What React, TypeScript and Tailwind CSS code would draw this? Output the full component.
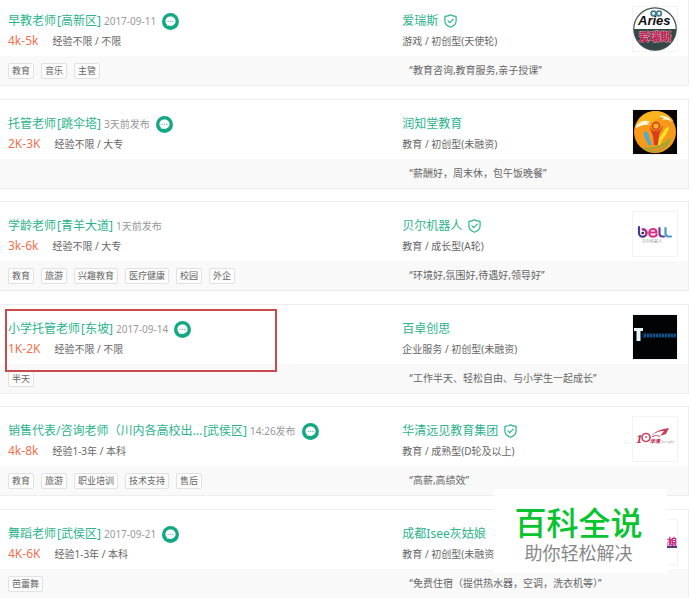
import type { ReactNode } from "react";

type Job = {
  title: string;
  area: string;
  time: string;
  chat?: boolean;
  salary: string;
  need: string;
  tags: string[];
  company: string;
  verified?: boolean;
  industry: string;
  slogan: string;
  logo: ReactNode;
  marked?: boolean;
};

function ChatIcon() {
  return (
    <svg viewBox="0 0 17 17" className="size-[17px]" aria-hidden="true">
      <circle cx="8.5" cy="8.5" r="8.5" fill="#14a783" />
      <path
        d="M8.5 3.600C5.600 3.600 3.400 5.600 3.400 8.300c0 1.500.7 2.700 1.800 3.600v1.200l1.400-.5c.6.2 1.200.3 1.900.3 2.900 0 5.100-2 5.100-4.600S11.400 3.600 8.500 3.600Z"
        fill="#fff"
      />
      <g fill="#5fc3aa">
        <circle cx="6.200" cy="8.400" r=".7" />
        <circle cx="8.500" cy="8.400" r=".7" />
        <circle cx="10.800" cy="8.400" r=".7" />
      </g>
    </svg>
  );
}

function ShieldIcon() {
  return (
    <svg
      viewBox="0 0 13 14"
      className="h-[14px] w-[13px]"
      fill="none"
      stroke="#2bb38c"
      strokeWidth="1.2"
      strokeLinejoin="round"
      strokeLinecap="round"
      aria-hidden="true"
    >
      <path d="M6.500.8C5 2 3 2.300.9 2.300V7c0 3.200 2.400 5.100 5.600 6.200C9.700 12.100 12.100 10.200 12.100 7V2.300C10 2.300 8 2 6.500.8Z" />
      <path d="m4 6.900 1.900 1.800 3.300-3.500" />
    </svg>
  );
}

function AriesLogo() {
  return (
    <svg viewBox="0 0 44 44" className="size-11" role="img" aria-label="Aries">
      <circle cx="22" cy="22" r="21.200" fill="#fff" stroke="#4a5656" strokeWidth="1.200" />
      <path d="M.8 22h42.400a21.200 21.200 0 0 1-42.400 0Z" fill="#36474a" />
      <g fill="none" stroke="#477b91" strokeWidth="1.800">
        <circle cx="20.500" cy="6.500" r="2.300" />
        <circle cx="26" cy="6.500" r="2.300" />
      </g>
      <text x="5" y="18" fontSize="13" fontWeight="900" fontStyle="italic" fontFamily="Liberation Sans, sans-serif" fill="#111">
        Aries
      </text>
      <text x="5.500" y="34" fontSize="11" fontWeight="900" fontFamily="Noto Sans CJK SC, sans-serif" fill="#c4215b" stroke="#eed" strokeWidth=".5" paintOrder="stroke">
        爱瑞斯
      </text>
    </svg>
  );
}

function SunLogo() {
  return (
    <svg viewBox="0 0 44 44" className="size-11" role="img" aria-label="润知堂教育">
      <rect width="44" height="44" fill="#080704" />
      <circle cx="22" cy="22" r="21" fill="#f79a1c" />
      <path d="M2 17C6 6 14 1 23 1c8 0 15 5 18 11-8-6-15-5-20-1-6 4-12 1-19 6Z" fill="#fbb41f" />
      <path d="M3 16c5-6 10-6 14-4l-3 2c3 0 4 1 4 1-5-1-10 0-15 3ZM26 6c6-1 10 1 13 6-4-3-7-3-10-2l2-2c-2-1-3-1-5-2Z" fill="#fff7d5" />
      <path d="M11 22c3-2 5 2 5 5l3 8h-4c-1-5-5-8-4-13Z" fill="#4faccd" />
      <path d="M36 17c-1 7-7 11-9 18h-4c1-7 6-9 8-14 1-3 4-4 5-4Z" fill="#fbe427" />
      <circle cx="23" cy="16" r="3.500" fill="#fbb41f" stroke="#d23a1d" strokeWidth="1.500" />
      <path d="M17 15c1 5 3 6 6 6 4 0 5-3 7-6-1 6-4 7-4 11l-1 9h-4l-1-9c-1-4-3-5-3-11Z" fill="#d93c1e" />
      <path d="M9 37c7 2 20 0 29-10-2 10-9 15-17 15-5 0-9-2-12-5Z" fill="#90ad37" />
      <path d="M13 39c8 1 17-2 22-7-4 6-8 9-14 9-3 0-6-1-8-2Z" fill="#f58a25" />
    </svg>
  );
}

function BellLogo() {
  return (
    <svg viewBox="0 0 44 44" className="size-11" role="img" aria-label="Bell">
      <g fill="none" strokeWidth="2.200" strokeLinecap="round" strokeLinejoin="round">
        <path d="M6 15v6a3.700 3.700 0 1 0 3.700-3.700" stroke="#51338b" />
        <path d="M10 17.300c3 0 4.200 3 3.200 5.200" stroke="#b83491" />
        <path d="M17 20.500h6.500c0-2-1.500-3.500-3.500-3.500s-3.800 1.500-3.800 4 1.800 3.700 4 3.700c1.800 0 3-.7 3.500-2" stroke="#dc2f84" />
        <path d="M26.500 16v5.500c0 2 1 3 2.800 3H31" stroke="#713997" />
        <path d="M32.500 16v5.500c0 2 1 3 2.800 3H38" stroke="#3c9fc8" />
      </g>
      <circle cx="9.700" cy="21" r="1.300" fill="#222" />
      <text x="9" y="31" fontSize="4" fontFamily="Noto Sans CJK SC, sans-serif" fill="#999">
        贝尔机器人
      </text>
    </svg>
  );
}

function TLogo() {
  return (
    <svg viewBox="0 0 44 44" className="size-11" role="img" aria-label="百卓创思">
      <rect width="44" height="44" fill="#020305" />
      <path d="M9 18h34v5H9Z" fill="#06213b" />
      <path d="M1 13h9v3H7.500v10h-4V16H1Z" fill="#e9f4fb" />
      <path d="M11 20.500h32" stroke="#185287" strokeWidth="3" strokeDasharray="2 1" />
    </svg>
  );
}

function TenLogo() {
  return (
    <svg viewBox="0 0 44 44" className="size-11" role="img" aria-label="华清远见">
      <text x="3" y="25.500" fontSize="13" fontWeight="700" fontStyle="italic" fontFamily="Liberation Serif, serif" fill="#c9304f">1</text>
      <circle cx="13" cy="20.500" r="4" fill="none" stroke="#cf4562" strokeWidth="1.700" />
      <circle cx="13" cy="20" r="1.200" fill="#e58196" />
      <path d="M36 11c-8 1-13 3-18 8 5-4 9-5 13-5l-4 5 6-2Z" fill="#cd3e5b" />
      <path d="M19 20c3-2 6-2 8 0" fill="none" stroke="#cd3e5b" />
      <text x="17" y="26" fontSize="5" fontWeight="900" fontStyle="italic" fontFamily="Noto Sans CJK SC, sans-serif" fill="#bd2847">华清</text>
      <text x="28" y="26" fontSize="4" fontStyle="italic" fontFamily="Liberation Sans, sans-serif" fill="#aaa">farsight</text>
    </svg>
  );
}

function IseeLogo() {
  return (
    <svg viewBox="0 0 44 44" className="size-11" role="img" aria-label="Isee灰姑娘">
      <text x="17" y="25" fontSize="9" fontWeight="900" fontFamily="Noto Sans CJK SC, sans-serif" fill="#c62683">灰姑娘</text>
      <path d="M10 26h34v2H10Z" fill="#533a7a" />
    </svg>
  );
}

const jobs: Job[] = [
  {
    title: "早教老师",
    area: "高新区",
    time: "2017-09-11",
    chat: true,
    salary: "4k-5k",
    need: "经验不限 / 不限",
    tags: ["教育", "音乐", "主管"],
    company: "爱瑞斯",
    verified: true,
    industry: "游戏 / 初创型(天使轮)",
    slogan: "教育咨询,教育服务,亲子授课",
    logo: <AriesLogo />,
  },
  {
    title: "托管老师",
    area: "跳伞塔",
    time: "3天前发布",
    chat: true,
    salary: "2K-3K",
    need: "经验不限 / 大专",
    tags: [],
    company: "润知堂教育",
    industry: "教育 / 初创型(未融资)",
    slogan: "薪酬好，周末休，包午饭晚餐",
    logo: <SunLogo />,
  },
  {
    title: "学龄老师",
    area: "青羊大道",
    time: "1天前发布",
    salary: "3k-6k",
    need: "经验不限 / 大专",
    tags: ["教育", "旅游", "兴趣教育", "医疗健康", "校园", "外企"],
    company: "贝尔机器人",
    verified: true,
    industry: "教育 / 成长型(A轮)",
    slogan: "环境好,氛围好,待遇好,领导好",
    logo: <BellLogo />,
  },
  {
    title: "小学托管老师",
    area: "东坡",
    time: "2017-09-14",
    chat: true,
    salary: "1K-2K",
    need: "经验不限 / 不限",
    tags: ["半天"],
    company: "百卓创思",
    industry: "企业服务 / 初创型(未融资)",
    slogan: "工作半天、轻松自由、与小学生一起成长",
    logo: <TLogo />,
    marked: true,
  },
  {
    title: "销售代表/咨询老师（川内各高校出...",
    area: "武侯区",
    time: "14:26发布",
    chat: true,
    salary: "4k-8k",
    need: "经验1-3年 / 本科",
    tags: ["教育", "旅游", "职业培训", "技术支持", "售后"],
    company: "华清远见教育集团",
    verified: true,
    industry: "教育 / 成熟型(D轮及以上)",
    slogan: "高薪,高绩效",
    logo: <TenLogo />,
  },
  {
    title: "舞蹈老师",
    area: "武侯区",
    time: "2017-09-21",
    chat: true,
    salary: "4K-6K",
    need: "经验1-3年 / 本科",
    tags: ["芭蕾舞"],
    company: "成都Isee灰姑娘",
    industry: "教育 / 初创型(未融资)",
    slogan: "免费住宿（提供热水器，空调，洗衣机等）",
    logo: <IseeLogo />,
  },
];

function JobCard({ job }: { job: Job }) {
  return (
    <li className="relative border-y border-r border-[#eeeeee] odd:mb-px">
      <div className="flex h-[59px] pt-[14px]">
        <div className="w-7/12 pl-2">
          <div className="flex h-5 items-center whitespace-nowrap">
            <a href="#" className="flex gap-px text-[12px] text-[#2bb38c]">
              <h3>{job.title}</h3>
              <span>[{job.area}]</span>
            </a>
            <span className="ml-[3px] text-[10px] text-[#999999]">{job.time}</span>
            {job.chat && (
              <button type="button" aria-label="聊一聊" className="ml-1.5">
                <ChatIcon />
              </button>
            )}
          </div>
          <div className="flex h-5 items-center gap-[14px] whitespace-nowrap">
            <span className="text-[12px] text-[#f0704f]">{job.salary}</span>
            <span className="text-[10px] text-[#666666]">{job.need}</span>
          </div>
        </div>
        <div className="flex w-5/12 justify-between pl-px pr-[10px]">
          <div>
            <div className="flex h-5 items-center gap-[6px] whitespace-nowrap">
              <a href="#" className="text-[12px] text-[#2bb38c]">
                {job.company}
              </a>
              {job.verified && <ShieldIcon />}
            </div>
            <p className="flex h-5 items-center whitespace-nowrap text-[10px] text-[#666666]">{job.industry}</p>
          </div>
          <a href="#" className="-mt-[5px] size-[46px] shrink-0 border border-[#f4f4f4]">
            {job.logo}
          </a>
        </div>
      </div>
      <div className="flex h-[29px] items-center bg-[#f9f9f9]">
        <ul className="flex w-7/12 gap-[7px] pl-2">
          {job.tags.map((tag) => (
            <li
              key={tag}
              className="flex h-4 items-center whitespace-nowrap rounded-xs border border-[#e2e2e2] bg-[#fcfcfc] px-[3px] text-[9px] text-[#666666]"
            >
              {tag}
            </li>
          ))}
        </ul>
        <p className="w-5/12 whitespace-nowrap pl-2 text-[10px] text-[#666666]">“{job.slogan}”</p>
      </div>
      {job.marked && <div className="absolute left-[5px] top-1 h-[63px] w-[272px] border-2 border-[#cb4b4d]" />}
    </li>
  );
}

export default function App() {
  return (
    <main className="relative min-h-screen overflow-hidden bg-white font-['Noto_Sans','Noto_Sans_CJK_SC',sans-serif]">
      <ul className="-mt-1 mr-[3px] flex flex-col gap-3">
        {jobs.map((job) => (
          <JobCard key={job.company} job={job} />
        ))}
      </ul>
      <aside className="absolute right-[25px] top-[489px] flex h-[84px] w-[173px] flex-col items-center justify-center bg-white pr-1 pt-2">
        <strong className="text-[32px] font-medium leading-9 text-[#08c42f]">百科全说</strong>
        <span className="text-[18px] leading-6 text-[#888888]">助你轻松解决</span>
      </aside>
    </main>
  );
}
